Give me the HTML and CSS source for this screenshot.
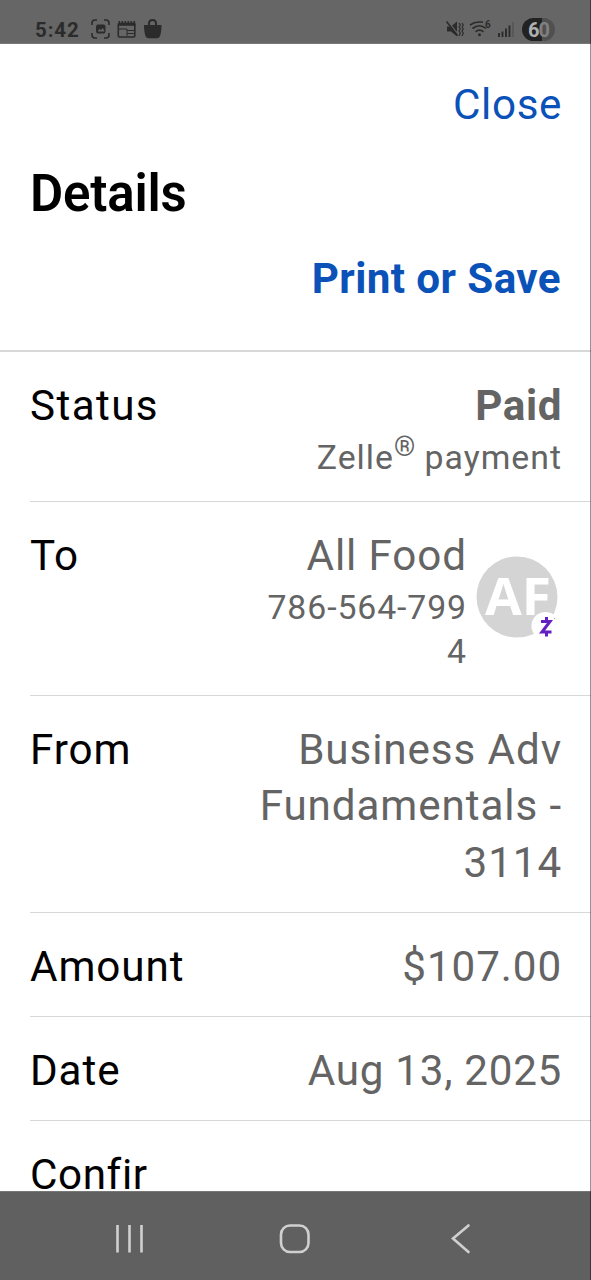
FILE: index.html
```html
<!DOCTYPE html>
<html lang="en">
<head>
<meta charset="utf-8">
<title>Details</title>
<link rel="stylesheet" href="styles.css">
</head>
<body>
<div class="screen">
  <header class="statusbar">
    <span class="clock">5:42</span>
    <svg class="left-icons" width="74" height="24" viewBox="0 0 74 24">
      <g fill="none" stroke="#2b2b2b" stroke-width="1.6">
        <path d="M2 8V6q0-3 3-3h2M14 3h2q3 0 3 3v2M19 16v2q0 3-3 3h-2M7 21H5q-3 0-3-3v-2"/>
        <rect x="28.300" y="6.500" width="16.500" height="13.500" rx="1"/>
        <path d="M28 7.500h17.500" stroke-width="2.500"/>
        <path d="M28.500 5h17" stroke-dasharray="1.600 1.400" stroke-width="2"/>
        <path d="M29 12h8v7M37 13.500h7M37 16.500h7" stroke-width="1"/>
        <path d="M59 10V6.500q0-3.500 3.500-3.500T66 6.500V10" stroke-width="2"/>
      </g>
      <rect x="6" y="7.500" width="9.500" height="9" rx="2" fill="#2b2b2b"/>
      <path d="M7.500 14.500l2-2.500 1.500 1 2-2 1.500 3.500z" fill="#666"/>
      <path d="M54 8h17.500q0 7-1.500 11-.7 2.300-3 2.300h-8.500q-2.300 0-3-2.300Q54 15 54 8z" fill="#2b2b2b"/>
    </svg>
    <svg class="right-icons" width="112" height="26" viewBox="0 0 112 26">
      <path d="M3 10.500h4l6-5v15l-6-5H3z" fill="#2b2b2b"/>
      <path d="M3 4.500l12 15" stroke="#666" stroke-width="1.500"/>
      <path d="M2.500 5.500l11 14" stroke="#2b2b2b" stroke-width="1.600"/>
      <path d="M15 7l1.300 2-1.300 2 1.300 2-1.300 2 1.300 2-1.300 3M18 7l1.300 2-1.300 2 1.300 2-1.300 2 1.300 2-1.300 3" fill="none" stroke="#2b2b2b" stroke-width="1.200"/>
      <g fill="none" stroke="#2b2b2b" stroke-width="1.600">
        <path d="M26 9q4-3 9-3h4M28.500 12.500q7-5.500 13.500 0M31.500 15.800q4-3.300 8 0"/>
      </g>
      <circle cx="35.500" cy="18.800" r="1.500" fill="#2b2b2b"/>
      <text class="wifi-six" x="41" y="12">6</text>
      <g stroke="#2b2b2b" stroke-width="1.900"><path d="M55 21v-4M58.500 21v-5.500M62 21v-8.500M65.500 21V9.500"/><path d="M69 21V6" stroke="#585858"/></g>
      <clipPath id="battery"><rect x="78" y="2" width="33" height="23" rx="11.500"/></clipPath>
      <g clip-path="url(#battery)"><path d="M78 2h20v23H78z" fill="#222"/><path d="M98 2h13v23H98z" fill="#505050"/></g>
      <text class="battery-text" x="84" y="20.500" textLength="22">6<tspan fill="#808080">0</tspan></text>
    </svg>
  </header>

  <main class="sheet">
    <section class="head">
      <a class="close">Close</a>
      <h1 class="title">Details</h1>
      <a class="print">Print or Save</a>
    </section>
    <section class="rows">
      <div class="row status">
        <span class="label">Status</span>
        <div class="value"><b>Paid</b><div class="sub">Zelle<span class="reg">®</span> payment</div></div>
      </div>
      <div class="row to">
        <span class="label">To</span>
        <div class="value">All Food<div class="sub">786-564-799<br>4</div></div>
        <svg class="avatar" width="83" height="84" viewBox="0 0 83 84">
          <circle cx="41" cy="41" r="40.500" fill="#d4d4d4"/>
          <text class="initials" x="9" y="59" textLength="66" lengthAdjust="spacingAndGlyphs">AF</text>
          <circle cx="69.500" cy="70" r="14" fill="#fff"/>
          <path d="M65 65.500h9l-8 10.500h9.500M70.500 61v4.500M70.500 76v4.500" fill="none" stroke="#6420c0" stroke-width="3"/>
          <circle cx="78.500" cy="62.500" r=".7" fill="#b7a2d4"/>
        </svg>
      </div>
      <div class="row from">
        <span class="label">From</span>
        <div class="value">Business Adv<br>Fundamentals -<br>3114</div>
      </div>
      <div class="row"><span class="label">Amount</span><div class="value">$107.00</div></div>
      <div class="row"><span class="label">Date</span><div class="value date">Aug 13, 2025</div></div>
      <div class="row last"><span class="label">Confir</span></div>
    </section>
  </main>

  <nav class="navbar">
    <svg width="591" height="89" viewBox="0 0 591 89" fill="none" stroke="#d0d0d0" stroke-width="2.600">
      <path d="M117.500 33v27.500M129.500 33v27.500M141.500 33v27.500"/>
      <rect x="281" y="33.500" width="27.500" height="26.500" rx="9"/>
      <path d="M468.500 33.500L453 46.500l15.500 13.500" stroke-linecap="round"/>
    </svg>
  </nav>
  <div class="edge"></div>
</div>
</body>
</html>
```

FILE: styles.css
```css
* { box-sizing: border-box; }
body { margin: 0; }
.screen {
  position: relative;
  width: 591px;
  height: 1280px;
  display: flex;
  flex-direction: column;
  overflow: hidden;
  background: #fff;
  font-family: Roboto, "Liberation Sans", sans-serif;
}
.statusbar {
  flex: none;
  height: 44px;
  padding: 14px 35px 0 35px;
  display: flex;
  align-items: center;
  background: #666;
  border-bottom: 1px solid #777;
}
.clock {
  width: 55px;
  font: bold 20.500px/28px Roboto, sans-serif;
  letter-spacing: 0.9px;
  padding-top: 2px;
  color: #2b2b2b;
}
.left-icons { flex: none; }
.right-icons { flex: none; margin-left: auto; }
.wifi-six { font: bold 10px Roboto, sans-serif; fill: #2b2b2b; }
.battery-text { font: bold 20px Roboto, sans-serif; fill: #b0b0b0; }

.sheet {
  flex: 1;
  min-height: 0;
  overflow: hidden;
  font-size: 42.2px;
  line-height: 56.3px;
  letter-spacing: 0.9px;
}
.head {
  height: 307.500px;
  padding: 33px 29px 0 30px;
  display: flex;
  flex-direction: column;
  border-bottom: 2px solid #d8d8d8;
}
.close, .print { align-self: flex-end; color: #0b52b8; }
.close { letter-spacing: 0.6px; }
.title {
  margin: 28px 0 0;
  font-size: 51px;
  line-height: 66px;
  font-weight: 600;
  letter-spacing: -0.2px;
}
.print { margin-top: 24px; font-weight: 700; letter-spacing: 0.4px; margin-right: 1px; }
.row {
  height: 104.200px;
  margin-left: 30px;
  padding: 26px 29px 0 0;
  display: flex;
  border-bottom: 1.500px solid #d8d8d8;
}
.status { height: 150px; }
.status .label { letter-spacing: 1.4px; }
.to { height: 194.500px; }
.from { height: 216.500px; }
.last { border-bottom: 0; }
.last .label { letter-spacing: 0.6px; }
.label { color: #000; }
.value { margin-left: auto; text-align: right; color: #646464; }
.value b { letter-spacing: 0.6px; }
.date { letter-spacing: 0.7px; }
.sub { font-size: 33.800px; line-height: 44.500px; padding-top: 2px; }
.status .sub { letter-spacing: 1px; }
.reg { font-size: 27px; line-height: 0; position: relative; top: -13px; letter-spacing: 0; }
.avatar { flex: none; margin: 28px 3px 0 9px; }
.initials { font: bold 52px "Open Sans", sans-serif; letter-spacing: 0; fill: #fff; }
.navbar { flex: none; height: 89px; background: #606060; border-top: 1px solid #777; }
.navbar svg { display: block; }
.edge { position: absolute; top: 0; right: 0; width: 1px; height: 100%; background: rgba(0, 0, 0, .42); }
```
